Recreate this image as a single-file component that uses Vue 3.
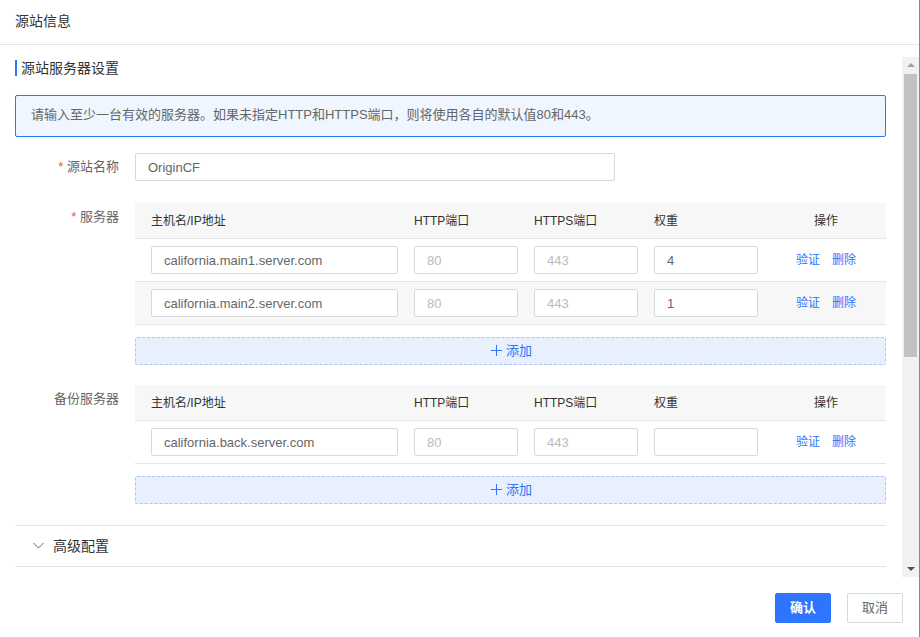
<template>
  <div class="dialog">
    <header class="dialog-head">源站信息</header>

    <div class="dialog-body">
      <div class="content">
        <h2 class="section-title">源站服务器设置</h2>
        <div class="alert">
          请输入至少一台有效的服务器。如果未指定HTTP和HTTPS端口，则将使用各自的默认值80和443。
        </div>

        <div class="form-row name-row">
          <label class="form-label"><span class="req">*</span> 源站名称</label>
          <input class="input name-input" type="text" value="OriginCF" />
        </div>

        <div v-for="group in groups" :key="group.label" class="form-row group-row">
          <label class="form-label">
            <span v-if="group.required" class="req">*</span> {{ group.label }}
          </label>
          <div class="group-main">
            <div class="table-row table-head">
              <span>主机名/IP地址</span>
              <span>HTTP端口</span>
              <span>HTTPS端口</span>
              <span>权重</span>
              <span class="ops-cell">操作</span>
            </div>
            <div
              v-for="(row, i) in group.rows"
              :key="row.host"
              class="table-row"
              :class="{ shaded: i % 2 === 1 }"
            >
              <input class="input" type="text" :value="row.host" />
              <input class="input" type="text" placeholder="80" />
              <input class="input" type="text" placeholder="443" />
              <input class="input" type="text" :value="row.weight" />
              <span class="ops-cell links">
                <a>验证</a>
                <a>删除</a>
              </span>
            </div>
            <button class="add-btn" type="button">
              <svg width="11" height="11" viewBox="0 0 11 11">
                <path d="M5.5 0v11M0 5.5h11" stroke="currentColor" fill="none" />
              </svg>
              添加
            </button>
          </div>
        </div>

        <div class="collapse-row">
          <svg width="11" height="7" viewBox="0 0 11 7">
            <path d="M.5 1l5 5 5-5" stroke="#666" fill="none" />
          </svg>
          <span>高级配置</span>
        </div>
      </div>

      <div class="scrollbar">
        <div class="arrow up"></div>
        <div class="track"><div class="thumb"></div></div>
        <div class="arrow down"></div>
      </div>
    </div>

    <footer class="dialog-foot">
      <button class="btn primary" type="button">确认</button>
      <button class="btn" type="button">取消</button>
    </footer>
  </div>
</template>

<script setup>
const groups = [
  {
    label: "服务器",
    required: true,
    rows: [
      { host: "california.main1.server.com", weight: "4" },
      { host: "california.main2.server.com", weight: "1" },
    ],
  },
  {
    label: "备份服务器",
    required: false,
    rows: [{ host: "california.back.server.com", weight: "" }],
  },
];
</script>

<style>
html,
body {
  margin: 0;
  background: #fff;
}
</style>

<style scoped>
.dialog {
  box-sizing: border-box;
  width: 920px;
  height: 637px;
  overflow: hidden;
  border-right: 1px solid #8a8a8a;
  background: #fff;
  color: #333;
  font-family: "Liberation Sans", "Noto Sans CJK SC", sans-serif;
  font-size: 13px;
}
.dialog-head {
  box-sizing: border-box;
  height: 45px;
  padding: 0 15px;
  border-bottom: 1px solid #e5e5e5;
  font-size: 14px;
  line-height: 43px;
}
.dialog-body {
  display: flex;
  height: 520px;
  margin-top: 12px;
}
.content {
  box-sizing: border-box;
  flex: none;
  width: 902px;
  padding: 3px 16px 0 15px;
  overflow: hidden;
}
.section-title {
  height: 16px;
  margin: 0;
  padding-left: 4px;
  border-left: 2px solid #2d74ff;
  color: #333;
  font-size: 14px;
  font-weight: 400;
  line-height: 16px;
}
.alert {
  box-sizing: border-box;
  height: 42px;
  margin-top: 19px;
  padding: 0 15px;
  border: 1px solid #2d74ff;
  border-radius: 2px;
  background: #eff6ff;
  color: #666;
  line-height: 38px;
}
.form-row {
  display: flex;
  column-gap: 16px;
}
.name-row {
  margin-top: 16px;
}
.group-row {
  margin-top: 20px;
}
.name-row + .group-row {
  margin-top: 22px;
}
.form-label {
  flex: none;
  width: 104px;
  color: #666;
  line-height: 28px;
  text-align: right;
}
.req {
  color: #f5533d;
}
.input {
  box-sizing: border-box;
  width: 100%;
  height: 28px;
  padding: 0 12px;
  border: 1px solid #d9d9d9;
  border-radius: 2px;
  outline: none;
  background: #fff;
  color: #666;
  font: inherit;
}
.input::placeholder {
  color: #bbb;
  opacity: 1;
}
.name-input {
  width: 480px;
}
.group-main {
  flex: none;
  width: 751px;
}
.table-row {
  display: grid;
  grid-template-columns: 247px 104px 104px 104px 1fr;
  column-gap: 16px;
  align-items: center;
  box-sizing: border-box;
  height: 43px;
  padding: 0 8px 0 16px;
  border-bottom: 1px solid #e5e5e5;
}
.table-head {
  height: 36px;
  padding-bottom: 3px;
  background: #f7f7f7;
  color: #333;
  font-size: 12px;
}
.shaded {
  background: #f7f7f7;
}
.ops-cell {
  text-align: center;
}
.links {
  display: flex;
  justify-content: center;
  column-gap: 12px;
  padding-bottom: 3px;
  font-size: 12px;
}
.links a {
  color: #2d74ff;
}
.add-btn {
  display: flex;
  align-items: center;
  justify-content: center;
  column-gap: 4px;
  box-sizing: border-box;
  width: 100%;
  height: 28px;
  margin-top: 12px;
  padding: 0 0 3px 2px;
  border: 1px dashed #a9c5ff;
  border-radius: 2px;
  background: #e8f0fe;
  color: #2d74ff;
  font: inherit;
}
.add-btn svg {
  margin-top: 1px;
}
.collapse-row {
  display: flex;
  align-items: center;
  column-gap: 9px;
  box-sizing: border-box;
  height: 42px;
  margin-top: 21px;
  padding: 0 0 2px 18px;
  border-top: 1px solid #e5e5e5;
  border-bottom: 1px solid #e5e5e5;
  font-size: 14px;
}
.collapse-row svg {
  margin-top: 1px;
}
.scrollbar {
  display: flex;
  flex: none;
  flex-direction: column;
  width: 17px;
  background: #f1f1f1;
}
.arrow {
  flex: none;
  height: 17px;
  position: relative;
}
.arrow::after {
  content: "";
  position: absolute;
  left: 5px;
  border-left: 4px solid transparent;
  border-right: 4px solid transparent;
}
.arrow.up::after {
  top: 6px;
  border-bottom: 4px solid #a3a3a3;
}
.arrow.down::after {
  top: 7px;
  border-top: 4px solid #505050;
}
.track {
  flex: 1;
  padding: 0 2px;
}
.thumb {
  width: 13px;
  height: 283px;
  background: #c1c1c1;
}
.dialog-foot {
  display: flex;
  justify-content: flex-end;
  column-gap: 16px;
  padding: 16px 16px 0 0;
}
.btn {
  box-sizing: border-box;
  width: 56px;
  height: 30px;
  padding: 0 0 3px;
  border: 1px solid #d9d9d9;
  border-radius: 2px;
  background: #fff;
  color: #666;
  font: inherit;
}
.btn.primary {
  border-color: #2d74ff;
  background: #2d74ff;
  color: #fff;
  font-weight: 700;
}
</style>
